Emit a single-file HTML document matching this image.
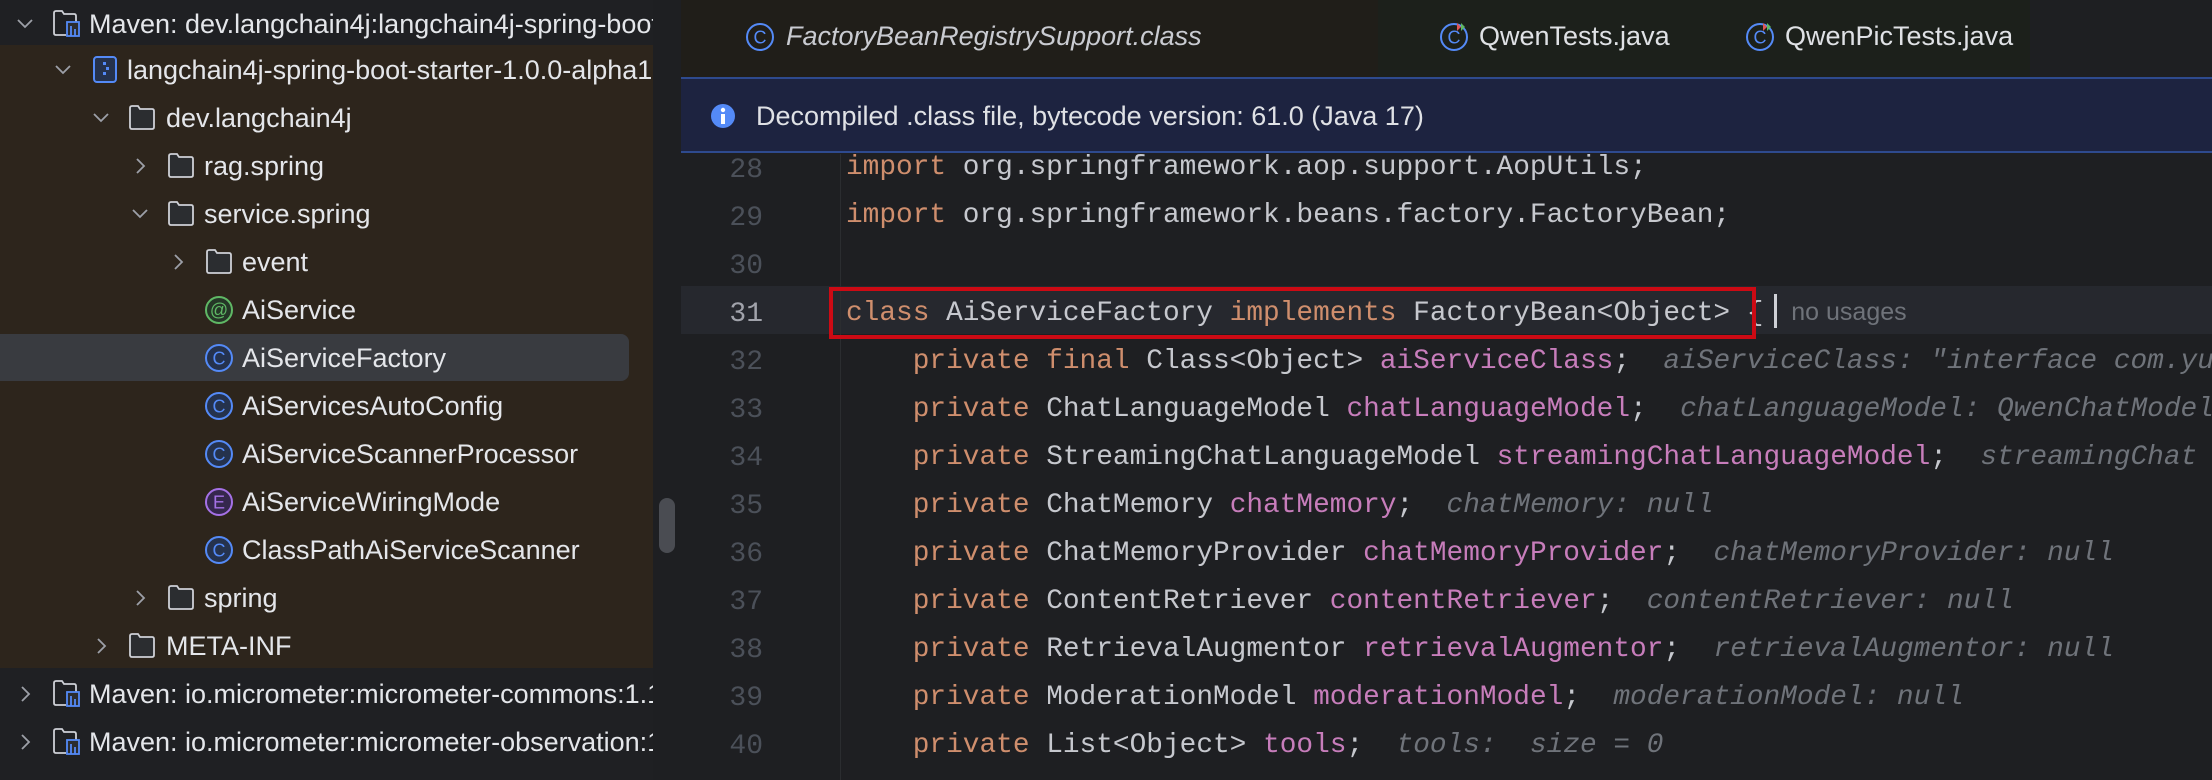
<!DOCTYPE html>
<html><head><meta charset="utf-8"><style>
*{margin:0;padding:0;box-sizing:border-box}
body{width:2212px;height:780px;overflow:hidden;background:#1e1f22;position:relative;font-family:"Liberation Sans",sans-serif;color:#dfe1e5}
.abs{position:absolute}
.row{position:absolute;left:0;height:48px;width:653px;font-size:27px;line-height:48px;white-space:nowrap;overflow:hidden;color:#e4e6ea}
.row span.t{position:absolute;top:0}
.chev{position:absolute;top:12px;width:24px;height:24px}
.ic{position:absolute;top:9px;width:30px;height:30px}
.code{position:absolute;left:846px;font-family:"Liberation Mono",monospace;font-size:27.8px;line-height:48px;white-space:pre;color:#c6c8ce}
.ln{position:absolute;left:690px;width:73px;text-align:right;font-family:"Liberation Mono",monospace;font-size:28px;line-height:48px;color:#4b5059}
.k{color:#cf8e6d}.f{color:#c77dbb}.h{color:#6f737a;font-style:italic}
</style></head><body>
<div class="abs" style="left:0;top:0;width:653px;height:45px;background:#1f2023"></div>
<div class="abs" style="left:0;top:45px;width:653px;height:623px;background:#2d251c"></div>
<div class="abs" style="left:0;top:668px;width:653px;height:112px;background:#1f2023"></div>
<div class="abs" style="left:653px;top:0;width:28px;height:780px;background:#1e1f22"></div>
<div class="abs" style="left:659px;top:498px;width:16px;height:55px;border-radius:8px;background:#4a4c52"></div>
<div class="abs" style="left:0;top:334px;width:629px;height:47px;border-radius:0 8px 8px 0;background:#393b40"></div>

<svg width="0" height="0" style="position:absolute"><defs>
<g id="down"><path d="M5 8 L12 15 L19 8" fill="none" stroke="#9da0a8" stroke-width="1.8"/></g>
<g id="right"><path d="M9 5 L16 12 L9 19" fill="none" stroke="#9da0a8" stroke-width="1.8"/></g>
<g id="fold"><path d="M3 5 Q3 3 5 3 L11 3 L13 6 L25 6 Q27 6 27 8 L27 24 Q27 26 25 26 L5 26 Q3 26 3 24 Z" fill="#2b2d30" stroke="#ced0d6" stroke-width="1.8"/></g>
<g id="cls"><circle cx="15" cy="15" r="13" fill="#25324d" stroke="#548af7" stroke-width="2"/><text x="15" y="21.5" text-anchor="middle" font-family="Liberation Sans" font-size="18" fill="#548af7">C</text></g>
<g id="mvn"><path d="M2 4 Q2 2 4 2 L10 2 L12 5 L22 5 Q24 5 24 7 L24 13 M2 4 L2 24 Q2 26 4 26 L14 26" fill="none" stroke="#ced0d6" stroke-width="1.8"/><rect x="15" y="13" width="12" height="14" fill="#2b2d30" stroke="#548af7" stroke-width="1.8"/><path d="M19 17 V27 M23 20 V27" stroke="#548af7" stroke-width="1.8"/></g>
</defs></svg>

<div class="row" style="top:0"><svg class="chev" style="left:13px"><use href="#down"/></svg><svg class="ic" style="left:52px"><use href="#mvn"/></svg><span class="t" style="left:89px">Maven: dev.langchain4j:langchain4j-spring-boot</span></div>
<div class="row" style="top:46px"><svg class="chev" style="left:51px"><use href="#down"/></svg><svg class="ic" style="left:92px"><rect x="2" y="2" width="22" height="25" rx="3" fill="#25324d" stroke="#548af7" stroke-width="2"/><path d="M11 7h3v3h-3zM14 12h3v3h-3zM11 17h3v3h-3z" fill="#548af7"/></svg><span class="t" style="left:127px">langchain4j-spring-boot-starter-1.0.0-alpha1.jar</span></div>
<div class="row" style="top:94px"><svg class="chev" style="left:89px"><use href="#down"/></svg><svg class="ic" style="left:127px"><use href="#fold"/></svg><span class="t" style="left:166px">dev.langchain4j</span></div>
<div class="row" style="top:142px"><svg class="chev" style="left:128px"><use href="#right"/></svg><svg class="ic" style="left:166px"><use href="#fold"/></svg><span class="t" style="left:204px">rag.spring</span></div>
<div class="row" style="top:190px"><svg class="chev" style="left:128px"><use href="#down"/></svg><svg class="ic" style="left:166px"><use href="#fold"/></svg><span class="t" style="left:204px">service.spring</span></div>
<div class="row" style="top:238px"><svg class="chev" style="left:166px"><use href="#right"/></svg><svg class="ic" style="left:204px"><use href="#fold"/></svg><span class="t" style="left:242px">event</span></div>
<div class="row" style="top:286px"><svg class="ic" style="left:204px"><circle cx="15" cy="15" r="13" fill="#253627" stroke="#5fb865" stroke-width="2"/><text x="15" y="21" text-anchor="middle" font-family="Liberation Sans" font-size="18" fill="#5fb865">@</text></svg><span class="t" style="left:242px">AiService</span></div>
<div class="row" style="top:334px"><svg class="ic" style="left:204px"><use href="#cls"/></svg><span class="t" style="left:242px">AiServiceFactory</span></div>
<div class="row" style="top:382px"><svg class="ic" style="left:204px"><use href="#cls"/></svg><span class="t" style="left:242px">AiServicesAutoConfig</span></div>
<div class="row" style="top:430px"><svg class="ic" style="left:204px"><use href="#cls"/></svg><span class="t" style="left:242px">AiServiceScannerProcessor</span></div>
<div class="row" style="top:478px"><svg class="ic" style="left:204px"><circle cx="15" cy="15" r="13" fill="#35274d" stroke="#a571e6" stroke-width="2"/><text x="15" y="21.5" text-anchor="middle" font-family="Liberation Sans" font-size="18" fill="#a571e6">E</text></svg><span class="t" style="left:242px">AiServiceWiringMode</span></div>
<div class="row" style="top:526px"><svg class="ic" style="left:204px"><use href="#cls"/></svg><span class="t" style="left:242px">ClassPathAiServiceScanner</span></div>
<div class="row" style="top:574px"><svg class="chev" style="left:128px"><use href="#right"/></svg><svg class="ic" style="left:166px"><use href="#fold"/></svg><span class="t" style="left:204px">spring</span></div>
<div class="row" style="top:622px"><svg class="chev" style="left:89px"><use href="#right"/></svg><svg class="ic" style="left:127px"><use href="#fold"/></svg><span class="t" style="left:166px">META-INF</span></div>
<div class="row" style="top:670px"><svg class="chev" style="left:13px"><use href="#right"/></svg><svg class="ic" style="left:52px"><use href="#mvn"/></svg><span class="t" style="left:89px">Maven: io.micrometer:micrometer-commons:1.12.3</span></div>
<div class="row" style="top:718px"><svg class="chev" style="left:13px"><use href="#right"/></svg><svg class="ic" style="left:52px"><use href="#mvn"/></svg><span class="t" style="left:89px">Maven: io.micrometer:micrometer-observation:1.12.3</span></div>

<div class="abs" style="left:681px;top:0;width:697px;height:77px;background:#201e19"></div>
<div class="abs" style="left:1378px;top:0;width:652px;height:77px;background:#1c201b"></div>
<div class="abs" style="left:2030px;top:0;width:182px;height:77px;background:#1e1f22"></div>
<svg class="abs" style="left:744px;top:21px" width="32" height="32"><circle cx="16" cy="16" r="13" fill="none" stroke="#548af7" stroke-width="2"/><text x="16" y="22.5" text-anchor="middle" font-family="Liberation Sans" font-size="18" fill="#548af7">C</text></svg>
<div class="abs" style="left:786px;top:16px;font-size:27px;font-style:italic;color:#c9cbd1;line-height:40px">FactoryBeanRegistrySupport.class</div>
<svg class="abs" style="left:1439px;top:19px" width="34" height="34"><circle cx="15" cy="18" r="13" fill="none" stroke="#548af7" stroke-width="2"/><text x="15" y="24.5" text-anchor="middle" font-family="Liberation Sans" font-size="18" fill="#548af7">C</text><path d="M18 4 L22 8 L18 12 Z" fill="#e05555"/><path d="M22 4 L26 8 L22 12 Z" fill="#5fb865"/></svg>
<div class="abs" style="left:1479px;top:16px;font-size:27px;color:#dfe1e5;line-height:40px">QwenTests.java</div>
<svg class="abs" style="left:1745px;top:19px" width="34" height="34"><circle cx="15" cy="18" r="13" fill="none" stroke="#548af7" stroke-width="2"/><text x="15" y="24.5" text-anchor="middle" font-family="Liberation Sans" font-size="18" fill="#548af7">C</text><path d="M18 4 L22 8 L18 12 Z" fill="#e05555"/><path d="M22 4 L26 8 L22 12 Z" fill="#5fb865"/></svg>
<div class="abs" style="left:1785px;top:16px;font-size:27px;color:#dfe1e5;line-height:40px">QwenPicTests.java</div>

<div class="abs" style="left:681px;top:77px;width:1531px;height:76px;background:#1d2340;border-top:2px solid #2e4a8e;border-bottom:2px solid #2e4a8e"></div>
<svg class="abs" style="left:709px;top:102px" width="28" height="28"><circle cx="14" cy="14" r="12" fill="#548af7"/><rect x="12" y="12" width="4" height="10" fill="#fff"/><circle cx="14" cy="8" r="2.2" fill="#fff"/></svg>
<div class="abs" style="left:756px;top:96px;font-size:27px;line-height:40px;color:#dfe1e5">Decompiled .class file, bytecode version: 61.0 (Java 17)</div>

<div class="abs" style="left:681px;top:286px;width:1531px;height:48px;background:#26282e"></div>
<div class="abs" style="left:840px;top:154px;width:1px;height:626px;background:#2b2d30"></div>
<div class="ln" style="top:147px">28<br>29<br>30<br><span style="color:#a1a3ab">31</span><br>32<br>33<br>34<br>35<br>36<br>37<br>38<br>39<br>40</div>
<div class="code" style="top:144px"><span class="k">import</span> org.springframework.aop.support.AopUtils;
<span class="k">import</span> org.springframework.beans.factory.FactoryBean;

<span class="k">class</span> AiServiceFactory <span class="k">implements</span> FactoryBean&lt;Object&gt; {<span style="font-family:'Liberation Sans',sans-serif;font-size:25px;color:#6f737a">    no usages</span>
    <span class="k">private final</span> Class&lt;Object&gt; <span class="f">aiServiceClass</span>;  <span class="h">aiServiceClass: "interface com.yu.ai</span>
    <span class="k">private</span> ChatLanguageModel <span class="f">chatLanguageModel</span>;  <span class="h">chatLanguageModel: QwenChatModel</span>
    <span class="k">private</span> StreamingChatLanguageModel <span class="f">streamingChatLanguageModel</span>;  <span class="h">streamingChat</span>
    <span class="k">private</span> ChatMemory <span class="f">chatMemory</span>;  <span class="h">chatMemory: null</span>
    <span class="k">private</span> ChatMemoryProvider <span class="f">chatMemoryProvider</span>;  <span class="h">chatMemoryProvider: null</span>
    <span class="k">private</span> ContentRetriever <span class="f">contentRetriever</span>;  <span class="h">contentRetriever: null</span>
    <span class="k">private</span> RetrievalAugmentor <span class="f">retrievalAugmentor</span>;  <span class="h">retrievalAugmentor: null</span>
    <span class="k">private</span> ModerationModel <span class="f">moderationModel</span>;  <span class="h">moderationModel: null</span>
    <span class="k">private</span> List&lt;Object&gt; <span class="f">tools</span>;  <span class="h">tools:  size = 0</span></div>
<div class="abs" style="left:1774px;top:294px;width:3px;height:34px;background:#ced0d6"></div>
<div class="abs" style="left:829px;top:287px;width:927px;height:52px;border:4px solid #cc0a14"></div>
</body></html>
